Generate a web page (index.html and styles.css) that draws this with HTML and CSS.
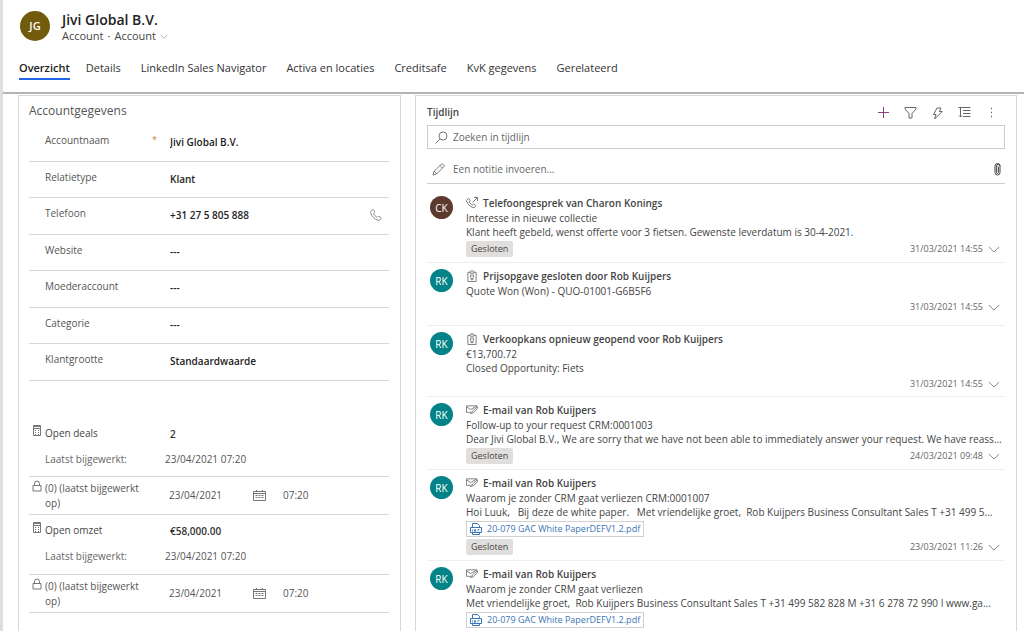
FILE: index.html
```html
<!DOCTYPE html>
<html lang="nl">
<head>
<meta charset="utf-8">
<title>Jivi Global B.V.</title>
<link rel="stylesheet" href="styles.css">
</head>
<body>
<svg class="sprite" aria-hidden="true">
  <symbol id="chevron" viewBox="0 0 14 8"><path d="M1 1l6 6 6-6"/></symbol>
  <symbol id="calc" viewBox="0 0 10 13"><path d="M1.500 1.500h7v10h-7zM1.500 2.500h7M1.500 4.500h7"/><path d="M3 6.500h1M6 6.500h1M3 8.500h1M6 8.500h1M3 10.500h1M6 10.500h1"/></symbol>
  <symbol id="lock" viewBox="0 0 10 13"><path d="M1 5.500h8v5.500H1zM2.500 5.500V3.500a2.500 2.500 0 0 1 5 0v2"/></symbol>
  <symbol id="calendar" viewBox="0 0 13 12"><path d="M.5 1.500h12v9H.5zM.5 3.500h12M3.500 0v2M9.500 0v2"/><path d="M2.500 5.500h8M2.500 7.500h8" stroke-dasharray="2 1"/></symbol>
  <symbol id="phone" viewBox="0 0 12 12"><path d="M1.200 1.600 2.700.6c.4-.2.700-.1.900.3l1 1.900c.2.400.1.700-.2.900l-.8.600c.5 1.700 1.900 3.200 3.700 4l.8-.8c.3-.2.600-.3.900-.1l1.800 1.200c.3.200.4.600.2.900l-.8 1.200c-.5.600-1.300.700-2.100.5C4.400 10.200 1.600 7.200.7 3.700c-.2-.8-.1-1.600.5-2.100z"/></symbol>
  <symbol id="call" viewBox="0 0 12 12"><path d="M1 2.500 2.300 1.500c.3-.2.600-.1.800.2l1 1.600c.2.300.1.600-.1.800l-.7.600c.4 1.400 1.500 2.600 3 3.300l.8-.7c.2-.2.500-.2.800-.1l1.600 1.100c.3.200.3.500.1.800l-.8 1.100c-.5.500-1.200.5-1.800.3C3.900 9.600 1.500 7.100.7 4.200c-.1-.6-.1-1.200.3-1.700zM6.500 5.500l5-5M8 .5h3.500V4"/></symbol>
  <symbol id="clip-note" viewBox="0 0 10 13"><path d="M3 2.500H.5v10h9v-10H7M3 1.500h1a1 1 0 0 1 2 0h1v2H3zM3.500 5.500h3v2.500a1.500 1.500 0 0 1-3 0zM3.500 10.500h3"/></symbol>
  <symbol id="mail" viewBox="0 0 13 10"><path d="M5.500 7.500H.5v-7h11.500L5 4.500.5 1.500M6 8.500l1-2.500 5.500-4.500v2L8 8zM6 8.500 4.500 9"/></symbol>
  <symbol id="pdf" viewBox="0 0 12 12"><path d="M2.500 4V.5h5l2 2V4M2.500 9.500v2h7v-2M.5 4.500h11v5H.5z"/><path d="M2.500 8.500v-2M4.500 6.500h1v2h-1zM8 8.500v-2h1.500" stroke-width=".8"/></symbol>
</svg>

<div class="page">
<header class="header">
  <div class="identity">
    <span class="logo">JG</span>
    <div>
      <h1>Jivi Global B.V.</h1>
      <div class="subtitle"><span>Account</span><span>·</span><button class="plain switcher" type="button">Account <svg><use href="#chevron"/></svg></button></div>
    </div>
  </div>
  <nav class="tabs">
    <button class="plain tab active" type="button">Overzicht</button>
    <button class="plain tab" type="button">Details</button>
    <button class="plain tab" type="button">LinkedIn Sales Navigator</button>
    <button class="plain tab" type="button">Activa en locaties</button>
    <button class="plain tab" type="button">Creditsafe</button>
    <button class="plain tab" type="button">KvK gegevens</button>
    <button class="plain tab" type="button">Gerelateerd</button>
  </nav>
</header>

<main class="columns">
  <section class="panel details">
    <h2>Accountgegevens</h2>
    <div class="fields">
      <div class="field"><label for="name">Accountnaam</label><span class="required">*</span><input id="name" value="Jivi Global B.V."></div>
      <div class="field"><label for="type">Relatietype</label><input id="type" value="Klant"></div>
      <div class="field"><label for="tel">Telefoon</label><input id="tel" value="+31 27 5 805 888"><button class="plain dial" type="button" aria-label="Bellen"><svg><use href="#phone"/></svg></button></div>
      <div class="field"><label for="web">Website</label><input id="web" value="---"></div>
      <div class="field"><label for="parent">Moederaccount</label><input id="parent" value="---"></div>
      <div class="field"><label for="cat">Categorie</label><input id="cat" value="---"></div>
      <div class="field"><label for="size">Klantgrootte</label><input id="size" value="Standaardwaarde"></div>
    </div>
    <div class="rollups">
      <div class="rollup">
        <svg class="calc"><use href="#calc"/></svg><span>Open deals</span><strong>2</strong>
        <span class="muted">Laatst bijgewerkt:</span><span class="stamp">23/04/2021 07:20</span>
      </div>
      <div class="updated">
        <svg class="lock"><use href="#lock"/></svg><label for="d1">(0) (laatst bijgewerkt op)</label><input id="d1" value="23/04/2021"><svg class="cal"><use href="#calendar"/></svg><input value="07:20" aria-label="Tijd">
      </div>
      <div class="rollup">
        <svg class="calc"><use href="#calc"/></svg><span>Open omzet</span><strong>€58,000.00</strong>
        <span class="muted">Laatst bijgewerkt:</span><span class="stamp">23/04/2021 07:20</span>
      </div>
      <div class="updated">
        <svg class="lock"><use href="#lock"/></svg><label for="d2">(0) (laatst bijgewerkt op)</label><input id="d2" value="23/04/2021"><svg class="cal"><use href="#calendar"/></svg><input value="07:20" aria-label="Tijd">
      </div>
    </div>
  </section>

  <section class="panel timeline">
    <div class="timeline-head">
      <h2>Tijdlijn</h2>
      <div class="tools">
        <button class="plain add" type="button" aria-label="Toevoegen"><svg viewBox="0 0 13 13"><path d="M6.500 1v11M1 6.500h11"/></svg></button>
        <button class="plain" type="button" aria-label="Filter"><svg viewBox="0 0 13 13"><path d="M1 1.500h11v1.500L8 7.500V12H5V7.500L1 3z"/></svg></button>
        <button class="plain" type="button" aria-label="Snelle acties"><svg viewBox="0 0 13 13"><path d="M6 2h4L8.300 5.500h3L3.500 13 5 8.500H2.500z"/></svg></button>
        <button class="plain" type="button" aria-label="Sorteren"><svg viewBox="0 0 13 13"><path d="M.5 1.500h12M5 4.500h7.500M5 7.500h7.500M5 10.500h7.500M2.500 1.500v9.500M1 9.500l1.500 1.500L4 9.500"/></svg></button>
        <button class="plain" type="button" aria-label="Meer"><svg viewBox="0 0 13 13"><path d="M6 2.500h1M6 6.500h1M6 10.500h1" stroke-width="1.500"/></svg></button>
      </div>
    </div>
    <div class="search">
      <svg viewBox="0 0 13 13"><circle cx="8" cy="5" r="4"/><path d="M5 8l-4.500 4.500"/></svg>
      <input placeholder="Zoeken in tijdlijn" aria-label="Zoeken in tijdlijn">
    </div>
    <div class="note">
      <svg viewBox="0 0 13 13"><path d="M1 12l1-3.500L9.500 1c1-.8 3.300 1.300 2.500 2.500L4.500 11zM2 8.500c1 0 2.500 1.500 2.500 2.500M8 2.500 10.500 5"/></svg>
      <input placeholder="Een notitie invoeren..." aria-label="Notitie">
      <button class="plain clip" type="button" aria-label="Bijlage"><svg viewBox="0 0 7 13"><path d="M1 3v6.500a2.500 2.500 0 0 0 5 0V3a1.700 1.700 0 0 0-3.400 0v6.500a.9.900 0 0 0 1.800 0V3.500M1 3a2.500 2.500 0 0 1 5 0"/></svg></button>
    </div>

    <ul class="items">
      <li class="item">
        <span class="avatar brown">CK</span>
        <article>
          <h3><svg class="kind"><use href="#call"/></svg>Telefoongesprek van Charon Konings</h3>
          <p>Interesse in nieuwe collectie</p>
          <p>Klant heeft gebeld, wenst offerte voor 3 fietsen. Gewenste leverdatum is 30-4-2021.</p>
          <footer><span class="tag">Gesloten</span><button class="plain when" type="button">31/03/2021 14:55<svg><use href="#chevron"/></svg></button></footer>
        </article>
      </li>
      <li class="item">
        <span class="avatar">RK</span>
        <article>
          <h3><svg class="kind"><use href="#clip-note"/></svg>Prijsopgave gesloten door Rob Kuijpers</h3>
          <p>Quote Won (Won) - QUO-01001-G6B5F6</p>
          <footer><button class="plain when" type="button">31/03/2021 14:55<svg><use href="#chevron"/></svg></button></footer>
        </article>
      </li>
      <li class="item">
        <span class="avatar">RK</span>
        <article>
          <h3><svg class="kind"><use href="#clip-note"/></svg>Verkoopkans opnieuw geopend voor Rob Kuijpers</h3>
          <p>€13,700.72</p>
          <p>Closed Opportunity: Fiets</p>
          <footer><button class="plain when" type="button">31/03/2021 14:55<svg><use href="#chevron"/></svg></button></footer>
        </article>
      </li>
      <li class="item">
        <span class="avatar">RK</span>
        <article>
          <h3><svg class="kind"><use href="#mail"/></svg>E-mail van Rob Kuijpers</h3>
          <p>Follow-up to your request CRM:0001003</p>
          <p>Dear Jivi Global B.V., We are sorry that we have not been able to immediately answer your request. We have reass...</p>
          <footer><span class="tag">Gesloten</span><button class="plain when" type="button">24/03/2021 09:48<svg><use href="#chevron"/></svg></button></footer>
        </article>
      </li>
      <li class="item">
        <span class="avatar">RK</span>
        <article>
          <h3><svg class="kind"><use href="#mail"/></svg>E-mail van Rob Kuijpers</h3>
          <p>Waarom je zonder CRM gaat verliezen CRM:0001007</p>
          <p>Hoi Luuk, &nbsp; Bij deze de white paper. &nbsp; Met vriendelijke groet, &nbsp;Rob Kuijpers Business Consultant Sales T +31 499 5...</p>
          <a class="file" href="#"><svg><use href="#pdf"/></svg>20-079 GAC White PaperDEFV1.2.pdf</a>
          <footer><span class="tag">Gesloten</span><button class="plain when" type="button">23/03/2021 11:26<svg><use href="#chevron"/></svg></button></footer>
        </article>
      </li>
      <li class="item">
        <span class="avatar">RK</span>
        <article>
          <h3><svg class="kind"><use href="#mail"/></svg>E-mail van Rob Kuijpers</h3>
          <p>Waarom je zonder CRM gaat verliezen</p>
          <p>Met vriendelijke groet, &nbsp;Rob Kuijpers Business Consultant Sales T +31 499 582 828 M +31 6 278 72 990 I www.ga...</p>
          <a class="file" href="#"><svg><use href="#pdf"/></svg>20-079 GAC White PaperDEFV1.2.pdf</a>
        </article>
      </li>
    </ul>
  </section>
</main>
</div>
</body>
</html>
```
FILE: styles.css
```css
* { box-sizing: border-box; }

html, body { height: 100%; }

body {
  margin: 0;
  overflow: hidden;
  background: #fff;
  color: #444;
  font: 10px/14px "Open Sans", "Noto Sans", sans-serif;
}

h1, h2, h3, p, ul { margin: 0; padding: 0; }
ul { list-style: none; }

svg { fill: none; stroke: #777; flex: none; }
.sprite { display: none; }

input {
  min-width: 0;
  width: 100%;
  padding: 0;
  border: 0;
  outline: 0;
  background: none;
  color: inherit;
  font: inherit;
}
input::placeholder { color: #666; opacity: 1; }

.plain {
  padding: 0;
  border: 0;
  background: none;
  color: inherit;
  font: inherit;
}

.page {
  display: flex;
  flex-direction: column;
  min-height: 100%;
  border-left: 3px solid #dedede;
}

/* Record header */
.header {
  padding: 10px 16px 0;
  border-bottom: 2px solid #b4b4b4;
  font-size: 11px;
}
.identity { display: flex; gap: 12px; align-items: flex-start; padding-left: 1px; }
.logo {
  display: grid;
  place-items: center;
  width: 30px;
  height: 30px;
  margin-top: 1px;
  border-radius: 50%;
  background: #735b0c;
  color: #fff;
  font-size: 11px;
  font-weight: 600;
}
h1 { color: #222; font-size: 14px; line-height: 19px; font-weight: 600; }
.subtitle { display: flex; gap: 4px; line-height: 14px; }
.switcher { display: flex; align-items: center; gap: 4px; }
.switcher svg { width: 8px; height: 5px; stroke: #777; }

.tabs { display: flex; gap: 20px; margin-top: 18px; padding-bottom: 12px; color: #333; }
.tab { padding-bottom: 3px; border-bottom: 2px solid transparent; line-height: 14px; white-space: nowrap; }
.tab.active { margin-right: -4px; border-color: #2266e3; color: #222; font-weight: 600; }

/* Two-column form */
.columns {
  flex: 1;
  display: grid;
  grid-template-columns: 383fr 602fr;
  gap: 14px;
  padding: 1px 7px 0 15px;
}
.panel { min-width: 0; border: solid #d8d8d8; border-width: 1px 1px 0; }
.details { padding: 6px 11px 0 10px; }
.details h2 { font-size: 12px; line-height: 18px; font-weight: 400; color: #555; }

.fields { display: grid; grid-auto-rows: 1fr; min-height: 256px; margin-top: 5px; }
.field {
  position: relative;
  display: grid;
  grid-template-columns: 125px 1fr auto;
  align-items: start;
  padding: 8px 7px 0 16px;
  border-bottom: 1px solid #d8d8d8;
}
.field label { color: #555; }
.field input { margin-top: 2px; height: 14px; color: #222; font-weight: 600; }
.required { position: absolute; left: 123px; top: 8px; color: #c77a2e; font-size: 9px; }
.dial { padding-top: 3px; }
.dial svg { display: block; width: 12px; height: 12px; stroke: #888; }

.rollups { margin-top: 43px; }
.rollup, .updated { border-bottom: 1px solid #d8d8d8; }
.rollup {
  display: grid;
  grid-template-columns: 16px 120px 1fr;
  grid-auto-rows: 26px;
  align-items: start;
  height: 60px;
  padding-top: 8px;
}
.rollup:first-child { height: 53px; padding-top: 2px; }
.rollup strong { padding: 1px 0 0 5px; font-weight: 600; color: #333; }
.muted { grid-column: 2; color: #666; }
.rollup .stamp { color: #555; }
.calc, .lock { width: 10px; height: 13px; margin-left: 3px; }
.rollup .calc { margin-top: -2px; }
.updated {
  display: grid;
  grid-template-columns: 16px 124px 84px 30px 1fr;
  align-items: center;
  min-height: 38px;
  line-height: 15px;
  color: #555;
}
.updated label { width: 100px; }
.updated .lock { align-self: start; margin-top: 3px; }
.cal { width: 13px; height: 12px; }

/* Timeline */
.timeline { padding: 7px 11px 0 11px; }
.timeline-head { display: flex; justify-content: space-between; align-items: center; }
.timeline-head h2 { font-size: 10px; line-height: 18px; font-weight: 600; }
.tools { display: flex; gap: 14px; padding-right: 7px; }
.tools svg { display: block; width: 13px; height: 13px; stroke: #666; }
.tools .add svg { stroke: #8b3f86; }

.search, .note { display: flex; align-items: center; }
.search { gap: 5px; height: 24px; margin-top: 4px; padding-left: 7px; border: 1px solid #ccc; }
.search svg, .note > svg { width: 13px; height: 13px; }
.note { gap: 8px; height: 35px; padding: 6px 4px 0 5px; border-bottom: 1px solid #ccc; }
.clip svg { display: block; width: 7px; height: 13px; stroke: #444; }

.items { margin-top: 6px; }
.item {
  display: flex;
  gap: 13px;
  min-height: 63px;
  padding: 5px 0 5px 3px;
  border-bottom: 1px solid #eee;
}
.item:last-child { border: 0; }
.avatar {
  flex: none;
  display: grid;
  place-items: center;
  width: 23px;
  height: 23px;
  margin-top: 1px;
  border-radius: 50%;
  background: #038387;
  color: #fff;
}
.avatar.brown { background: #5c3a2e; }
article { flex: 1; min-width: 0; }
h3 { display: flex; align-items: center; gap: 5px; font-size: 10px; line-height: 16px; font-weight: 600; }
.kind { width: 12px; height: 12px; }
article p { overflow: hidden; text-overflow: ellipsis; white-space: nowrap; }
footer { display: flex; align-items: center; min-height: 14px; margin-top: 2px; }
.tag { padding: 1px 5px; border-radius: 2px; background: #e1dfdd; font-size: 9px; }
.when { display: flex; align-items: center; gap: 5px; margin-left: auto; padding-right: 5px; color: #666; font-size: 9px; white-space: nowrap; }
.when svg { width: 12px; height: 7px; stroke: #777; }
.file {
  display: flex;
  align-items: center;
  gap: 5px;
  width: fit-content;
  height: 16px;
  margin-top: 2px;
  padding: 0 3px;
  border: 1px solid #d0d0d0;
  color: #3a76b5;
  font-size: 9px;
  text-decoration: none;
}
.file svg { width: 12px; height: 12px; stroke: #3a76b5; }
```
